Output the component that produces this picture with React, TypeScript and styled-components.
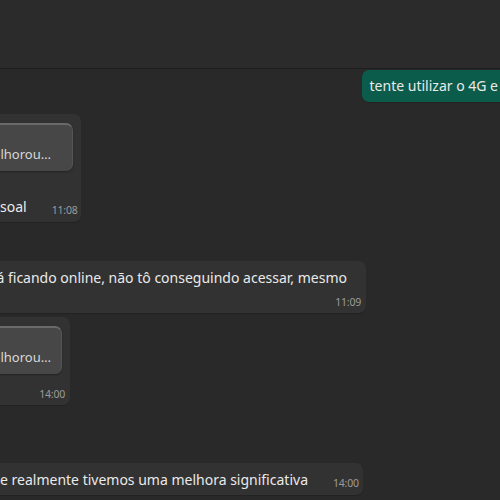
import React from "react";
import styled, { createGlobalStyle } from "styled-components";

const Global = createGlobalStyle`
  html, body { margin: 0; padding: 0; background: #292929; overflow: hidden; }
  body { font-family: "Noto Sans", "Open Sans", sans-serif; }
  #root { width: 500px; height: 500px; overflow: hidden; }
`;

const Page = styled.div`
  width: 500px;
  height: 500px;
  display: flex;
  flex-direction: column;
  background: #292929;
  overflow: hidden;
`;

const Header = styled.header`
  height: 68px;
  flex: none;
  background: #2b2b2b;
  border-bottom: 1px solid #1e1e1e;
`;

const Chat = styled.main`
  display: flex;
  flex-direction: column;
`;

const Row = styled.div<{ $top: number; $out?: boolean }>`
  display: flex;
  justify-content: ${(p) => (p.$out ? "flex-end" : "flex-start")};
  margin-top: ${(p) => p.$top}px;
`;

const Bubble = styled.div<{ $w?: number; $out?: boolean }>`
  box-sizing: border-box;
  ${(p) => (p.$w ? `width: ${p.$w + 10}px;` : "")}
  margin-left: ${(p) => (p.$out ? "0" : "-10px")};
  margin-right: ${(p) => (p.$out ? "-40px" : "0")};
  background: ${(p) => (p.$out ? "#0b5c4b" : "#323232")};
  border-radius: 7px;
  color: #eaeaea;
  font-size: 14px;
  line-height: 20px;
  display: flex;
  flex-direction: column;
  box-shadow: 0 1px 1px rgba(0, 0, 0, 0.18);
`;

const OutText = styled.div`
  padding: 6px 42px 6px 8px;
  white-space: nowrap;
`;

const Quote = styled.div<{ $pr: number }>`
  margin: 9px 8px 0 0;
  height: 48px;
  box-sizing: border-box;
  background: #474747;
  border-top: 2px solid #6a6a6a;
  border-right: 1px solid #555;
  border-radius: 0 7px 7px 0;
  display: flex;
  align-items: flex-end;
  justify-content: flex-end;
  padding: 0 ${(p) => p.$pr}px 8px 0;
  color: #d8d8d8;
  font-size: 13px;
  line-height: 18px;
  white-space: nowrap;
  box-shadow: 0 1px 2px rgba(0, 0, 0, 0.35);
`;

const Line = styled.div<{ $pt: number; $pr: number; $pb: number }>`
  display: flex;
  align-items: flex-end;
  justify-content: space-between;
  gap: 25px;
  padding: ${(p) => p.$pt}px ${(p) => p.$pr}px ${(p) => p.$pb}px 10px;
  white-space: nowrap;
`;

const TextEnd = styled.div<{ $pt: number; $pr: number }>`
  display: flex;
  justify-content: flex-end;
  padding: ${(p) => p.$pt}px ${(p) => p.$pr}px 0 0;
  white-space: nowrap;
`;

const Time = styled.span`
  font-size: 10.5px;
  letter-spacing: -0.2px;
  line-height: 14px;
  color: #9c9c9c;
  flex: none;
`;

const TimeRow = styled.div<{ $pt: number }>`
  display: flex;
  justify-content: flex-end;
  padding: ${(p) => p.$pt}px 5px 4px 0;
`;

export default function App() {
  return (
    <>
      <Global />
      <Page>
        <Header />
        <Chat>
          <Row $top={1} $out>
            <Bubble $out>
              <OutText>tente utilizar o 4G e</OutText>
            </Bubble>
          </Row>

          <Row $top={12}>
            <Bubble $w={81}>
              <Quote $pr={21}>elhorou…</Quote>
              <Line $pt={26} $pr={5} $pb={5}>
                <span>soal</span>
                <Time>11:08</Time>
              </Line>
            </Bubble>
          </Row>

          <Row $top={39}>
            <Bubble $w={366}>
              <TextEnd $pt={7} $pr={19}>
                á ficando online, não tô conseguindo acessar, mesmo
              </TextEnd>
              <TimeRow $pt={7}>
                <Time>11:09</Time>
              </TimeRow>
            </Bubble>
          </Row>

          <Row $top={4}>
            <Bubble $w={70}>
              <Quote $pr={10}>elhorou…</Quote>
              <TimeRow $pt={13}>
                <Time>14:00</Time>
              </TimeRow>
            </Bubble>
          </Row>

          <Row $top={58}>
            <Bubble $w={363}>
              <Line $pt={7} $pr={5} $pb={5}>
                <TextEnd $pt={0} $pr={0}>
                  e realmente tivemos uma melhora significativa
                </TextEnd>
                <Time>14:00</Time>
              </Line>
            </Bubble>
          </Row>
        </Chat>
      </Page>
    </>
  );
}
